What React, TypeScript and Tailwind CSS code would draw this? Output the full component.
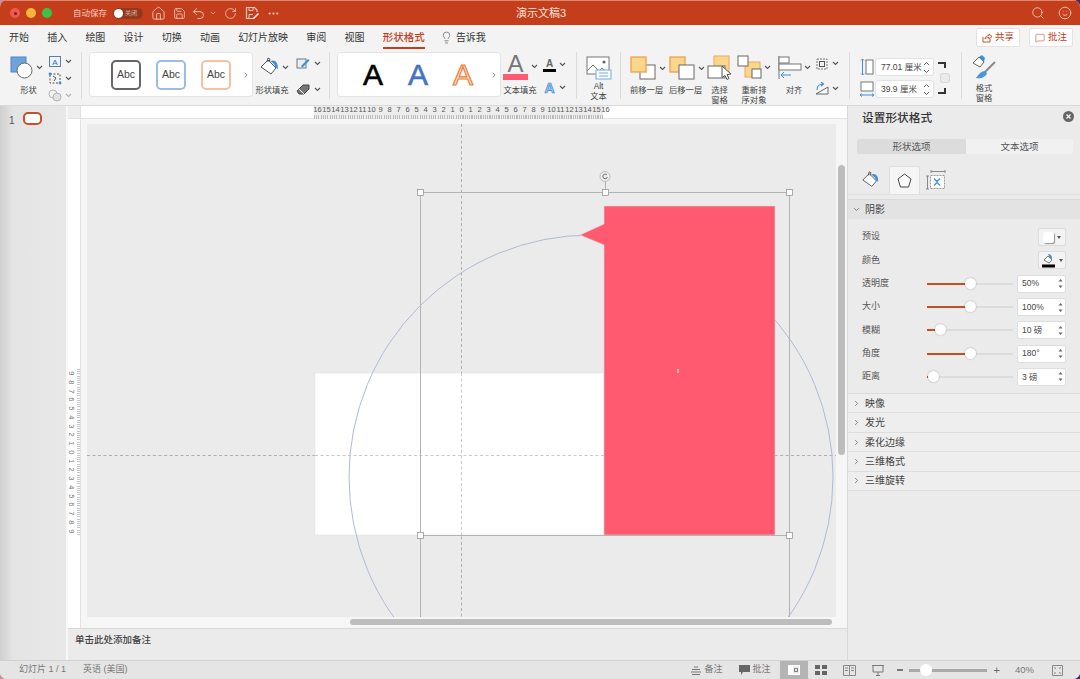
import { ChevronDown, ChevronRight, Ellipsis, House, Lightbulb, MessageSquare, RotateCw, Save, Search, Smile, Undo2 } from "lucide-react";
import type { ReactNode } from "react";

const tabs = ["开始", "插入", "绘图", "设计", "切换", "动画", "幻灯片放映", "审阅", "视图"];
const rulerH = [16, 15, 14, 13, 12, 11, 10, 9, 8, 7, 6, 5, 4, 3, 2, 1, 0, 1, 2, 3, 4, 5, 6, 7, 8, 9, 10, 11, 12, 13, 14, 15, 16];
const rulerV = [9, 8, 7, 6, 5, 4, 3, 2, 1, 0, 1, 2, 3, 4, 5, 6, 7, 8, 9];

const shadowRows = [
  { label: "透明度", value: "50%", knob: 43 },
  { label: "大小", value: "100%", knob: 43 },
  { label: "模糊", value: "10 磅", knob: 13 },
  { label: "角度", value: "180°", knob: 43 },
  { label: "距离", value: "3 磅", knob: 6 },
];
const collapsed = ["映像", "发光", "柔化边缘", "三维格式", "三维旋转"];

const Chev = ({ className = "" }: { className?: string }) => (
  <svg width="7" height="5" viewBox="0 0 7 5" className={`shrink-0 ${className}`}>
    <path d="M1 1l2.5 2.5L6 1" fill="none" stroke="#555" strokeWidth="1.1" />
  </svg>
);

const Divider = ({ className = "" }: { className?: string }) => (
  <div className={`w-px h-[47px] mt-[2px] bg-[#dcdcdc] shrink-0 ${className}`} />
);

const Label = ({ children }: { children: ReactNode }) => (
  <div className="text-[8.3px] leading-[10px] text-[#444] text-center whitespace-nowrap">{children}</div>
);

const Bucket = ({ w = 22 }: { w?: number }) => (
  <svg width={w} height={w} viewBox="0 0 22 22" className="shrink-0">
    <path d="M2 11l7-7 8 8-5 6z" fill="#fff" stroke="#555" strokeWidth="1" />
    <path d="M8 6l1-4 2 1-1 3" fill="none" stroke="#555" strokeWidth="1" />
    <path d="M11 5c5-2 8 1 8 8l-3-2c0-3-2-4-5-6z" fill="#3f8fd6" />
  </svg>
);

const LayerIcon = ({ front }: { front: boolean }) => (
  <svg width="29" height="24" viewBox="0 0 29 24" className="shrink-0">
    {front ? (
      <>
        <rect x="10" y="9" width="15" height="14" fill="#fff" stroke="#666" />
        <rect x="1" y="1" width="15" height="15" fill="#fcd68a" stroke="#f0a35e" strokeWidth="1.4" />
      </>
    ) : (
      <>
        <rect x="1" y="1" width="15" height="15" fill="#fcd68a" stroke="#f0a35e" strokeWidth="1.4" />
        <rect x="10" y="9" width="15" height="14" fill="#fff" stroke="#666" />
      </>
    )}
  </svg>
);

const Stepper = ({ value, className = "" }: { value: string; className?: string }) => (
  <div className={`flex items-center justify-between w-[59px] h-[18px] bg-white rounded-[3px] border border-[#e2e2e2] pl-[5px] pr-[3px] text-[8.5px] text-[#444] ${className}`}>
    <span>{value}</span>
    <svg width="7" height="13" viewBox="0 0 7 13">
      <path d="M1 4l2.5-2.5L6 4M1 9l2.5 2.5L6 9" fill="none" stroke="#555" strokeWidth="0.9" />
    </svg>
  </div>
);

const Ribbon = () => (
  <div className="h-[56px] flex items-start bg-[#f3f3f3] border-b border-[#dadada] shrink-0">
    {/* 形状 */}
    <div className="ml-[10px] w-[37px] pt-[4px] flex flex-col items-center">
      <div className="flex items-center gap-[3px] h-[27px] self-start">
        <svg width="23" height="23" viewBox="0 0 23 23">
          <rect x="1" y="1" width="15" height="15" fill="#6ea3dc" stroke="#4a86c8" />
          <circle cx="14.5" cy="14.5" r="7.5" fill="#fff" stroke="#666" />
        </svg>
        <Chev />
      </div>
      <div className="mt-[4px]"><Label>形状</Label></div>
    </div>
    <div className="w-[28px] ml-[1px] pt-[4px] flex flex-col gap-[3px]">
      <div className="flex items-center gap-[3px] h-[14px]">
        <svg width="14" height="13" viewBox="0 0 14 13">
          <rect x="1.5" y="1.5" width="11" height="10" fill="#eef4fb" stroke="#5b7ea8" />
          <text x="7" y="10" textAnchor="middle" fontSize="8" fill="#2f6fb5">A</text>
        </svg>
        <Chev />
      </div>
      <div className="flex items-center gap-[3px] h-[14px]">
        <svg width="14" height="13" viewBox="0 0 14 13">
          <path d="M2 2h10v9H2z" fill="none" stroke="#555" strokeDasharray="2 1.5" />
          <path d="M5 4l3 2-2 3" fill="none" stroke="#555" />
          <circle cx="2" cy="2" r="1.4" fill="#3f8fd6" />
          <circle cx="12" cy="11" r="1.4" fill="#3f8fd6" />
        </svg>
        <Chev />
      </div>
      <div className="flex items-center gap-[3px] h-[14px] opacity-40">
        <svg width="14" height="13" viewBox="0 0 14 13">
          <circle cx="5" cy="5" r="4" fill="none" stroke="#555" />
          <circle cx="9" cy="8" r="4" fill="#ccc" stroke="#555" />
        </svg>
        <Chev />
      </div>
    </div>
    <Divider className="ml-[5px]" />

    {/* 形状样式 */}
    <div className="ml-[7px] mt-[2px] w-[164px] h-[45px] bg-white rounded-[3px] border border-[#e4e4e4] flex items-center pl-[21px] gap-[15px] shrink-0">
      <div className="w-[30px] h-[30px] shrink-0 rounded-[5px] border-2 border-[#666] flex items-center justify-center text-[10.5px] text-[#444]">Abc</div>
      <div className="w-[30px] h-[30px] shrink-0 rounded-[5px] border-2 border-[#9dbbe8] flex items-center justify-center text-[10.5px] text-[#444]">Abc</div>
      <div className="w-[30px] h-[30px] shrink-0 rounded-[5px] border-2 border-[#f8c0a0] flex items-center justify-center text-[10.5px] text-[#444]">Abc</div>
      <ChevronRight size={8} strokeWidth={2} className="-ml-[4px] shrink-0 text-[#555]" />
    </div>
    <div className="w-[40px] -ml-[1px] pt-[3px] flex flex-col items-center shrink-0">
      <div className="flex items-center gap-[1px] h-[28px] pl-[4px]">
        <Bucket />
        <Chev />
      </div>
      <div className="mt-[4px]"><Label>形状填充</Label></div>
    </div>
    <div className="w-[28px] ml-[4px] pt-[6px] flex flex-col gap-[12px] shrink-0">
      <div className="flex items-center gap-[4px] h-[14px]">
        <svg width="14" height="13" viewBox="0 0 14 13">
          <rect x="1" y="2" width="9" height="9" fill="#e9eef5" stroke="#777" />
          <path d="M5 9l7-7 1.5 1.500-7 7z" fill="#3f8fd6" />
        </svg>
        <Chev />
      </div>
      <div className="flex items-center gap-[4px] h-[14px]">
        <svg width="14" height="13" viewBox="0 0 14 13">
          <path d="M1 8l6-6h6v4l-5 5H3z" fill="#777" stroke="#444" />
          <path d="M3 6l5 5" stroke="#fff" />
        </svg>
        <Chev />
      </div>
    </div>
    <Divider className="ml-[5px]" />

    {/* 艺术字 */}
    <div className="ml-[7px] mt-[2px] w-[164px] h-[45px] bg-white rounded-[3px] border border-[#e4e4e4] flex items-center text-[30px] leading-none pl-[25px] gap-[25px] shrink-0">
      <span className="text-black w-[20px] shrink-0 text-center [-webkit-text-stroke:0.6px_#000]">A</span>
      <span className="text-[#4472c4] w-[20px] shrink-0 text-center [-webkit-text-stroke:0.6px_#4472c4]">A</span>
      <span className="text-[#fde3cf] w-[20px] shrink-0 text-center [-webkit-text-stroke:1.2px_#ed7d31]">A</span>
      <ChevronRight size={8} strokeWidth={2} className="-ml-[8px] shrink-0 text-[#555]" />
    </div>
    <div className="w-[40px] -ml-[1px] pt-[1px] flex flex-col items-center shrink-0">
      <div className="flex items-center gap-[2px] h-[30px]">
        <div className="flex flex-col items-center w-[26px]">
          <span className="text-[24px] leading-[21px] text-[#777]">A</span>
          <div className="w-[25px] h-[6px] bg-[#ff5a70]" />
        </div>
        <Chev />
      </div>
      <div className="mt-[4px]"><Label>文本填充</Label></div>
    </div>
    <div className="w-[28px] ml-[2px] pt-[7px] flex flex-col gap-[8px] shrink-0">
      <div className="flex items-center gap-[3px] h-[15px] pl-[1px]">
        <div className="flex flex-col items-center w-[13px]">
          <span className="text-[10px] leading-[11px] font-bold text-[#666]">A</span>
          <div className="w-[13px] h-[3px] bg-black" />
        </div>
        <Chev />
      </div>
      <div className="flex items-center gap-[3px] h-[15px] pl-[1px]">
        <span className="w-[13px] text-center text-[14px] leading-none font-bold text-[#9cc8f0] [-webkit-text-stroke:0.7px_#3f85cc]">A</span>
        <Chev />
      </div>
    </div>
    <Divider className="ml-[6px]" />

    {/* 替换文字 */}
    <div className="w-[43px] pt-[6px] flex flex-col items-center shrink-0">
      <svg width="26" height="24" viewBox="0 0 26 24" className="h-[24px]">
        <rect x="1" y="1" width="22" height="17" fill="#fff" stroke="#777" />
        <path d="M1 15l6-6 6 6 3-3 7 6" fill="none" stroke="#777" />
        <circle cx="18" cy="6" r="1.6" fill="#666" />
        <rect x="10" y="14" width="15" height="9" fill="#fff" stroke="#6aaee6" />
        <path d="M13 17h9M13 20h9" stroke="#6aaee6" />
      </svg>
      <div className="mt-[1px]"><Label>Alt<br />文本</Label></div>
    </div>
    <Divider />

    {/* 排列 */}
    <div className="w-[39px] ml-[9px] pt-[5px] flex flex-col items-start shrink-0">
      <div className="flex items-center h-[26px]">
        <LayerIcon front />
        <Chev />
      </div>
      <div className="mt-[4px]"><Label>前移一层</Label></div>
    </div>
    <div className="w-[34px] pt-[5px] flex flex-col items-start shrink-0">
      <div className="flex items-center h-[26px]">
        <LayerIcon front={false} />
        <Chev />
      </div>
      <div className="mt-[4px]"><Label>后移一层</Label></div>
    </div>
    <div className="w-[33px] pt-[5px] flex flex-col items-center shrink-0">
      <svg width="26" height="26" viewBox="0 0 26 26">
        <rect x="7" y="1" width="15" height="18" fill="#fcd68a" stroke="#f0a35e" />
        <rect x="1" y="11" width="17" height="12" fill="#fff" stroke="#666" />
        <path d="M15 11l9 8-4 .5 2 4-2 1-2-4-3 2z" fill="#fff" stroke="#555" />
      </svg>
      <div className="mt-[4px]"><Label>选择<br />窗格</Label></div>
    </div>
    <div className="w-[38px] -ml-[1px] pt-[4px] flex flex-col items-center shrink-0">
      <div className="flex items-center h-[27px]">
        <svg width="27" height="25" viewBox="0 0 27 25">
          <rect x="8" y="7" width="15" height="15" fill="#fcd68a" stroke="#f0a35e" />
          <rect x="1" y="1" width="10" height="10" fill="#fff" stroke="#666" />
          <rect x="15" y="14" width="9" height="9" fill="#fff" stroke="#666" />
        </svg>
        <Chev />
      </div>
      <div className="mt-[4px]"><Label>重新排<br />序对象</Label></div>
    </div>
    <div className="w-[36px] ml-[3px] pt-[4px] flex flex-col items-center shrink-0">
      <div className="flex items-center gap-[2px] h-[27px]">
        <svg width="24" height="25" viewBox="0 0 24 25">
          <path d="M1 1v23" stroke="#777" />
          <rect x="1" y="2" width="10" height="6" fill="#fff" stroke="#777" />
          <rect x="1" y="9" width="22" height="6" fill="#fff" stroke="#777" />
          <path d="M13 20H3m3-3l-3 3 3 3" fill="none" stroke="#3f8fd6" />
        </svg>
        <Chev />
      </div>
      <div className="mt-[4px]"><Label>对齐</Label></div>
    </div>
    <div className="w-[28px] ml-[3px] pt-[6px] flex flex-col gap-[10px] shrink-0">
      <div className="flex items-center gap-[3px] h-[15px]">
        <svg width="14" height="14" viewBox="0 0 14 14">
          <rect x="2" y="2" width="10" height="10" fill="none" stroke="#777" strokeDasharray="2 1" />
          <rect x="4.5" y="4.5" width="5" height="5" fill="none" stroke="#555" />
        </svg>
        <Chev />
      </div>
      <div className="flex items-center gap-[3px] h-[15px]">
        <svg width="14" height="14" viewBox="0 0 14 14">
          <path d="M1 12l12-7v7z" fill="#fff" stroke="#666" />
          <path d="M2 8c0-4 3-6 6-6M6 0l2.500 2L6 4" fill="none" stroke="#3f8fd6" strokeWidth="1.2" />
        </svg>
        <Chev />
      </div>
    </div>
    <Divider className="ml-[6px]" />

    {/* 大小 */}
    <div className="ml-[10px] pt-[8px] flex flex-col gap-[4px] shrink-0">
      <div className="flex items-center gap-[1px]">
        <svg width="14" height="18" viewBox="0 0 14 18">
          <rect x="6" y="2" width="7" height="14" fill="#fff" stroke="#777" />
          <path d="M2.500 1v16M1 2.500L2.500 1 4 2.500M1 15.500L2.500 17 4 15.500" fill="none" stroke="#3f8fd6" />
        </svg>
        <Stepper value="77.01 厘米" />
      </div>
      <div className="flex items-center gap-[1px]">
        <svg width="14" height="18" viewBox="0 0 14 18">
          <rect x="1" y="2" width="12" height="9" fill="#fff" stroke="#777" />
          <path d="M0 15h14M2 13.500L0 15l2 1.500M12 13.500l2 1.500-2 1.500" fill="none" stroke="#3f8fd6" />
        </svg>
        <Stepper value="39.9 厘米" />
      </div>
    </div>
    <div className="ml-[4px] mt-[12px] w-[12px] h-[32px] flex flex-col justify-between items-start shrink-0">
      <div className="w-[8px] h-[6px] border-t-2 border-r-2 border-[#333]" />
      <div className="w-[10px] h-[10px] rounded-[2px] bg-[#eaeaea] border border-[#d8d8d8] ml-[2px]" />
      <div className="w-[8px] h-[6px] border-b-2 border-r-2 border-[#333]" />
    </div>
    <Divider className="ml-[11px]" />

    <div className="ml-[5px] w-[34px] pt-[4px] flex flex-col items-center shrink-0">
      <svg width="25" height="27" viewBox="0 0 25 27">
        <path d="M1 9l6-6 5 5-4 5z" fill="#fff" stroke="#666" />
        <path d="M7 3l3-2 3 3-1 4" fill="#3f8fd6" />
        <path d="M23 8L12 19" stroke="#8a8a8a" strokeWidth="2" />
        <path d="M13 17c-4 0-6 3-9 7 5 1 10-1 11-5z" fill="#4b97dc" />
      </svg>
      <div className="mt-[2px]"><Label>格式<br />窗格</Label></div>
    </div>
  </div>
);

const Canvas = () => (
  <div className="relative w-[749px] h-[493px] bg-[#ebebeb] overflow-hidden">
    <svg width="749" height="493" viewBox="87 124 749 493" className="block">
      <line x1="461.5" y1="124" x2="461.5" y2="617" stroke="#adadad" strokeDasharray="3 2.5" />
      <line x1="87" y1="455.5" x2="836" y2="455.5" stroke="#adadad" strokeDasharray="3 2.5" />
      <rect x="315" y="373" width="289" height="162" fill="#fff" stroke="#dfdfdf" strokeWidth="0.5" />
      <line x1="461.5" y1="373" x2="461.5" y2="535" stroke="#c9c9c9" strokeDasharray="3 2.5" />
      <line x1="315" y1="455.5" x2="604" y2="455.5" stroke="#c9c9c9" strokeDasharray="3 2.5" />
      <circle cx="591" cy="477" r="242" fill="none" stroke="#aebbd6" strokeWidth="1" />
      <path d="M604 206H775V535H604V245L580 235L604 224Z" fill="#ff5a70" stroke="#d9d9d9" strokeWidth="0.6" />
      <path d="M420.500 535V617M789.500 535V617" stroke="#b3b3b3" />
      <rect x="420.500" y="192.500" width="369" height="343" fill="none" stroke="#b3b3b3" />
      <line x1="605.500" y1="181" x2="605.500" y2="192" stroke="#b3b3b3" />
      <circle cx="605" cy="176.500" r="5" fill="#ededed" stroke="#bdbdbd" />
      <path d="M607 175a2.300 2.300 0 1 0 .4 2" fill="none" stroke="#555" strokeWidth="0.9" />
      <path d="M678 369v4" stroke="#fff" />
      {[[420, 192], [605, 192], [789, 192], [420, 535], [789, 535]].map(([x, y]) => (
        <rect key={`${x}-${y}`} x={x - 2.5} y={y - 2.5} width="6" height="6" fill="#fff" stroke="#8c8c8c" strokeWidth="0.7" />
      ))}
    </svg>
  </div>
);

const Editor = () => (
  <div className="relative flex-1 min-h-0 bg-[#f6f6f6]">
    {/* horizontal ruler */}
    <div className="flex h-[13px] bg-white border-b border-[#e3e3e3]">
      <div className="w-[13px] bg-[#eeeeee] border-r border-[#e0e0e0] shrink-0" />
      <div className="ml-[233px] w-[289px] bg-[#ededed]">
        <div className="flex text-[7.5px] leading-[8px] text-[#555] -ml-[1px]">
          {rulerH.map((n, i) => (
            <span key={i} className="w-[9px] shrink-0 text-center">{n}</span>
          ))}
        </div>
        <div className="h-[4px] mt-px bg-[repeating-linear-gradient(90deg,#bdbdbd_0,#bdbdbd_1px,transparent_1px,transparent_2.25px)]" />
      </div>
    </div>
    <div className="flex">
      {/* vertical ruler */}
      <div className="w-[13px] h-[509px] bg-white border-r border-[#e3e3e3] shrink-0">
        <div className="mt-[250px] w-full h-[166px] flex">
          <div className="w-[9px] flex flex-col items-center">
            {rulerV.map((n, i) => (
              <span key={i} className="h-[8.75px] shrink-0 text-[7.5px] leading-[9px] text-[#777] rotate-90">{n}</span>
            ))}
          </div>
          <div className="w-[3px] h-full bg-[repeating-linear-gradient(180deg,#c4c4c4_0,#c4c4c4_1px,transparent_1px,transparent_2.2px)]" />
        </div>
      </div>
      <div className="ml-[6px] mt-[5px]">
        <Canvas />
      </div>
    </div>
    {/* scrollbars */}
    <div className="absolute left-[282px] top-[513px] w-[482px] h-[6px] rounded-full bg-[#bdbdbd]" />
    <div className="absolute left-[770px] top-[59px] w-[7px] h-[290px] rounded-full bg-[#bdbdbd]" />
  </div>
);

const SliderRow = ({ label, value, knob }: { label: string; value: string; knob: number }) => (
  <div className="h-[23.3px] flex items-center pl-[14px]">
    <span className="w-[65px] text-[9px] text-[#555]">{label}</span>
    <div className="relative w-[86px] h-[2px] bg-[#dcdcdc]">
      <div className="h-full bg-[#c4501f]" style={{ width: knob }} />
      <div className="absolute top-[-5px] w-[11px] h-[11px] rounded-full bg-white shadow-[0_0_2px_rgba(0,0,0,0.3)]" style={{ left: knob - 5 }} />
    </div>
    <div className="ml-[4px] w-[49px] h-[18px] bg-white rounded-[2px] border border-[#dedede] flex items-center justify-between pl-[4px] pr-[2px] text-[8.5px] text-[#444]">
      <span>{value}</span>
      <svg width="5" height="11" viewBox="0 0 5 11">
        <path d="M.5 3.500L2.500 1l2 2.500zM.5 7.500L2.500 10l2-2.500z" fill="#666" />
      </svg>
    </div>
  </div>
);

const DropBtn = ({ children }: { children: ReactNode }) => (
  <div className="w-[28px] h-[18px] rounded-[2px] bg-[#f3f3f3] border border-[#dcdcdc] flex items-center justify-center gap-[3px]">
    {children}
    <svg width="4" height="3" viewBox="0 0 4 3"><path d="M0 0h4L2 3z" fill="#555" /></svg>
  </div>
);

const Panel = () => (
  <div className="w-[233px] shrink-0 bg-[#ebebeb] border-l border-[#d9d9d9] flex flex-col">
    <div className="h-[33px] flex items-start justify-between pl-[14px] pr-[6px] pt-[3px]">
      <span className="text-[11.7px] font-medium text-[#333]">设置形状格式</span>
      <svg width="11" height="11" viewBox="0 0 11 11" className="mt-[2px]">
        <circle cx="5.500" cy="5.500" r="5.500" fill="#666" />
        <path d="M3.500 3.500l4 4M7.500 3.500l-4 4" stroke="#fff" strokeWidth="1.1" />
      </svg>
    </div>
    <div className="ml-[9px] w-[216px] h-[15px] flex text-[9.5px] rounded-[2px] overflow-hidden text-[#555]">
      <div className="w-[109px] bg-[#dcdcdc] text-center leading-[15px]">形状选项</div>
      <div className="flex-1 bg-[#f1f1f1] text-center leading-[15px]">文本选项</div>
    </div>
    <div className="mt-[13px] h-[28px] flex items-end pl-[13px] border-b border-[#e0e0e0]">
      <div className="w-[28px] h-[28px] flex items-center"><Bucket w={20} /></div>
      <div className="w-[31px] h-[28px] bg-[#f5f5f5] border border-b-0 border-[#dedede] rounded-t-[2px] flex items-center justify-center">
        <svg width="15" height="15" viewBox="0 0 15 15">
          <path d="M7.500 1L14 6l-2.500 8h-8L1 6z" fill="#fff" stroke="#444" strokeWidth="1" />
        </svg>
      </div>
      <div className="w-[31px] h-[28px] flex items-center justify-center">
        <svg width="20" height="20" viewBox="0 0 20 20">
          <path d="M5 1.500h14M5 0v3M19 0v3M1.500 6v13M0 6h3M0 19h3" stroke="#888" />
          <rect x="4.500" y="5.500" width="14" height="13" fill="#fff" stroke="#999" strokeDasharray="2 1" />
          <path d="M8 8.500l3 3 3-3M8 15.500l3-3 3 3" fill="none" stroke="#3f8fd6" strokeWidth="1.3" />
        </svg>
      </div>
    </div>
    <div className="mt-[4px] h-[20px] bg-[#e3e3e3] border-t border-[#dcdcdc] flex items-center pl-[4px] gap-[4px] text-[10px] text-[#444]">
      <ChevronDown size={9} className="text-[#666]" />
      阴影
    </div>
    <div className="pt-[6.5px]">
      <div className="h-[23.3px] flex items-center justify-between pl-[14px] pr-[14px]">
        <span className="text-[9px] text-[#555]">预设</span>
        <DropBtn>
          <div className="w-[11px] h-[11px] bg-white rounded-[2px] shadow-[1px_1px_1px_rgba(0,0,0,0.4)]" />
        </DropBtn>
      </div>
      <div className="h-[23.3px] flex items-center justify-between pl-[14px] pr-[14px]">
        <span className="text-[9px] text-[#555]">颜色</span>
        <DropBtn>
          <svg width="15" height="16" viewBox="0 0 15 16">
            <path d="M3 8l4-4 4 4-3 3z" fill="#fff" stroke="#555" strokeWidth="0.8" />
            <path d="M7 2c3 0 4 2 4 5l-2-1z" fill="#3f8fd6" />
            <rect x="1" y="12.500" width="13" height="3" fill="#000" />
          </svg>
        </DropBtn>
      </div>
      {shadowRows.map((r) => (
        <SliderRow key={r.label} {...r} />
      ))}
    </div>
    <div className="mt-[4.5px] border-t border-[#dcdcdc]">
      {collapsed.map((c) => (
        <div key={c} className="h-[19.4px] bg-[#eeeeee] border-b border-[#dedede] flex items-center pl-[4px] gap-[4px] text-[10px] text-[#444]">
          <ChevronRight size={9} className="text-[#666]" />
          {c}
        </div>
      ))}
    </div>
  </div>
);

const StatusBar = () => (
  <div className="h-[19px] shrink-0 bg-[#e5e5e5] border-t border-[#d0d0d0] flex items-center text-[9px] text-[#777]">
    <span className="ml-[19px]">幻灯片 1 / 1</span>
    <span className="ml-[17px]">英语 (美国)</span>
    <div className="ml-auto flex items-center gap-[4px]">
      <svg width="10" height="9" viewBox="0 0 10 9"><path d="M3 1h4M1 3.500h8M0 6h10M1 8.500h8" stroke="#777" /></svg>
      <span>备注</span>
    </div>
    <div className="ml-[16px] flex items-center gap-[3px]">
      <svg width="11" height="10" viewBox="0 0 11 10"><path d="M0 0h11v7H4L2 10V7H0z" fill="#666" /></svg>
      <span>批注</span>
    </div>
    <div className="ml-[9px] w-[28px] h-[18px] bg-[#b4b4b4] flex items-center justify-center">
      <svg width="12" height="10" viewBox="0 0 12 10"><rect width="4" height="10" fill="#fff" /><rect x="4.500" y=".5" width="7" height="9" fill="#eee" stroke="#fff" /><path d="M6.500 3.500h3v3h-3z" fill="none" stroke="#777" /></svg>
    </div>
    <svg width="13" height="10" viewBox="0 0 13 10" className="ml-[7px]"><path d="M0 0h5v4H0zM7 0h5v4H7zM0 6h5v4H0zM7 6h5v4H7z" fill="#666" /></svg>
    <svg width="13" height="11" viewBox="0 0 13 11" className="ml-[15px]"><path d="M.5.5h12v10H.5zM6.500.5v10M2 3h3M2 5.500h3M8 3h3M8 5.500h3" fill="none" stroke="#888" /></svg>
    <svg width="12" height="11" viewBox="0 0 12 11" className="ml-[16px]"><path d="M0 .5h12M1 .5v6.500h10V.5M6 7v3M4 10.500h4" fill="none" stroke="#777" /></svg>
    <div className="ml-[13px] w-[6px] h-[2px] bg-[#777]" />
    <div className="relative ml-[6px] w-[78px] h-[3px] bg-[#aaa]">
      <div className="absolute left-[11px] top-[-5px] w-[12px] h-[12px] rounded-full bg-white" />
    </div>
    <span className="ml-[7px] text-[11px] leading-none text-[#666]">+</span>
    <span className="ml-[15px] text-[9.5px]">40%</span>
    <svg width="11" height="11" viewBox="0 0 11 11" className="ml-[18px] mr-[17px]"><path d="M.5.5h10v10H.5z" fill="none" stroke="#888" /><path d="M2 2l2 1-1 1zM9 2L7 3l1 1zM2 9l2-1-1-1zM9 9L7 8l1-1z" fill="#666" /></svg>
  </div>
);

export default function App() {
  return (
    <div className="w-[1080px] h-[679px] overflow-hidden bg-[linear-gradient(90deg,#c98d9d,#3d2a6b)] [font-family:'Liberation_Sans','Noto_Sans_CJK_SC',sans-serif]">
      <div className="w-full h-full rounded-[7px] overflow-hidden flex flex-col bg-[#f3f3f3]">
        {/* title bar */}
        <div className="relative h-[25px] shrink-0 bg-[#c43e1c] border-t border-[#d98a74] flex items-center">
          <div className="ml-[10px] flex gap-[6px]">
            <div className="w-[10px] h-[10px] rounded-full bg-[#ee5a52] flex items-center justify-center">
              <div className="w-[3px] h-[3px] rounded-full bg-[#8c1a14]" />
            </div>
            <div className="w-[10px] h-[10px] rounded-full bg-[#f5b53a]" />
            <div className="w-[10px] h-[10px] rounded-full bg-[#3cc245]" />
          </div>
          <span className="ml-[21px] text-[8.5px] text-[#f3cfc3]">自动保存</span>
          <div className="ml-[6px] w-[30px] h-[11px] rounded-full bg-[#8f3a20] flex items-center pl-[1px]">
            <div className="w-[9px] h-[9px] rounded-full bg-white" />
            <span className="ml-[2px] text-[6px] text-[#e6b6a5]">关闭</span>
          </div>
          <House size={15} strokeWidth={1.4} className="ml-[8px] text-[#f2c9bb]" />
          <Save size={13} strokeWidth={1.5} className="ml-[7px] text-[#f2c9bb]" />
          <Undo2 size={15} strokeWidth={1.5} className="ml-[5px] text-[#f2c9bb]" />
          <ChevronDown size={8} strokeWidth={2} className="ml-[3px] text-[#f2c9bb]" />
          <RotateCw size={13} strokeWidth={1.5} className="ml-[7px] text-[#f2c9bb]" />
          <svg width="14" height="14" viewBox="0 0 14 14" className="ml-[8px]">
            <path d="M8 12.500H1.500v-11h8l2.500 2.500v2" fill="none" stroke="#f2c9bb" strokeWidth="1.2" />
            <path d="M4 1.500v3h4v-3M4 12.500V8.500h4" fill="none" stroke="#f2c9bb" strokeWidth="1" />
            <path d="M8 12l5-5 1 1-5 5H8z" fill="#fff" />
          </svg>
          <Ellipsis size={13} strokeWidth={2} className="ml-[8px] text-[#f2c9bb]" />
          <span className="absolute left-[516px] top-[5px] text-[11px] leading-[14px] text-[#f8e4dd]">演示文稿3</span>
          <Search size={14} strokeWidth={1.5} className="ml-auto text-[#f2c9bb]" />
          <Smile size={14} strokeWidth={1.5} className="ml-[13px] mr-[8px] text-[#f2c9bb]" />
        </div>

        {/* tabs */}
        <div className="h-[25px] shrink-0 bg-[#f3f3f3] flex items-center pl-[9px] gap-[18.2px] text-[10px] text-[#333]">
          {tabs.map((t) => (
            <span key={t}>{t}</span>
          ))}
          <span className="relative text-[10.5px] text-[#c43e1c] font-medium">
            形状格式
            <span className="absolute left-0 right-0 -bottom-[4px] h-[2px] bg-[#c43e1c]" />
          </span>
          <div className="flex items-center gap-[3px] -ml-[3px]">
            <Lightbulb size={13} strokeWidth={1.2} className="text-[#555]" />
            <span>告诉我</span>
          </div>
          <div className="ml-auto flex gap-[9px] pr-[7px]">
            <div className="w-[44px] h-[19px] bg-white rounded-[2px] border border-[#e3e3e3] flex items-center justify-center gap-[3px] text-[#c43e1c] text-[9.5px]">
              <svg width="10" height="10" viewBox="0 0 10 10"><path d="M1 4v5h7V6M3 6c0-2 2-3.500 4-3.500V1l3 2.500L7 6V4.500C5 4.500 4 5 3 6z" fill="none" stroke="#c43e1c" strokeWidth="0.9" /></svg>
              共享
            </div>
            <div className="w-[44px] h-[19px] bg-white rounded-[2px] border border-[#e3e3e3] flex items-center justify-center gap-[3px] text-[#c43e1c] text-[9.5px]">
              <MessageSquare size={10} strokeWidth={1.3} />
              批注
            </div>
          </div>
        </div>

        <Ribbon />

        {/* body */}
        <div className="flex-1 min-h-0 flex">
          <div className="w-[68px] shrink-0 bg-[linear-gradient(90deg,#cfcfcf,#e4e4e4_20%,#e8e8e8)] border-r-2 border-[#f7f7f7] flex items-start pt-[6px]">
            <span className="ml-[9px] text-[10px] text-[#555] mt-[1px]">1</span>
            <div className="ml-[8px] w-[19px] h-[13px] rounded-[5px] bg-white border-2 border-[#c8502c]" />
          </div>
          <div className="flex-1 min-w-0 flex flex-col">
            <Editor />
            <div className="h-[32px] shrink-0 bg-[#ebebeb] border-t border-[#d9d9d9] pl-[7px] pt-[4px] text-[9.5px] font-medium text-[#444]">
              单击此处添加备注
            </div>
          </div>
          <Panel />
        </div>

        <StatusBar />
      </div>
    </div>
  );
}
